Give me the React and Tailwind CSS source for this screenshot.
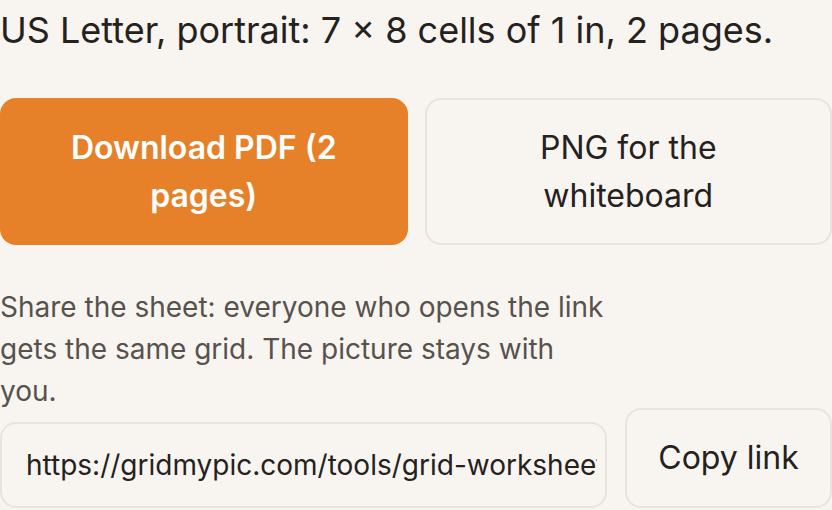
import React from 'react';

export default function App() {
  return (
    <div
      className="w-[832px] h-[510px] overflow-hidden bg-[#f8f5f1] pt-[3px] text-[#25211d]"
      style={{ fontFamily: 'Inter, "Noto Sans", sans-serif' }}
    >
      <p className="text-[36px] leading-[54px]">
        US Letter, portrait: 7 × 8 cells of 1 in, 2 pages.
      </p>

      {/* Export buttons */}
      <div className="mt-[41px] grid grid-cols-2 gap-[17px]">
        <button className="h-[147px] rounded-[16px] bg-[#e6812a] px-[32px] text-[32px] font-semibold leading-[48px] text-white">
          Download PDF (2 pages)
        </button>
        <button className="h-[147px] rounded-[16px] border-2 border-[#e8e3dc] px-[32px] text-[32px] leading-[48px] text-[#25211d]">
          PNG for the whiteboard
        </button>
      </div>

      <p className="mt-[41px] w-[615px] text-[28px] leading-[42px] text-[#57524c]">
        Share the sheet: everyone who opens the link gets the same grid. The picture stays with you.
      </p>

      {/* Share link */}
      <div className="-mt-[4px] flex items-end gap-[18px]">
        <input
          readOnly
          value="https://gridmypic.com/tools/grid-worksheet?cols=7&rows=8"
          className="h-[86px] w-[607px] rounded-[16px] border-2 border-[#e8e3dc] bg-transparent pl-[24px] pr-[8px] text-[28px] text-[#25211d] outline-none"
        />
        <button className="h-[100px] flex-1 rounded-[16px] border-2 border-[#e8e3dc] text-[32px] text-[#25211d]">
          Copy link
        </button>
      </div>
    </div>
  );
}
